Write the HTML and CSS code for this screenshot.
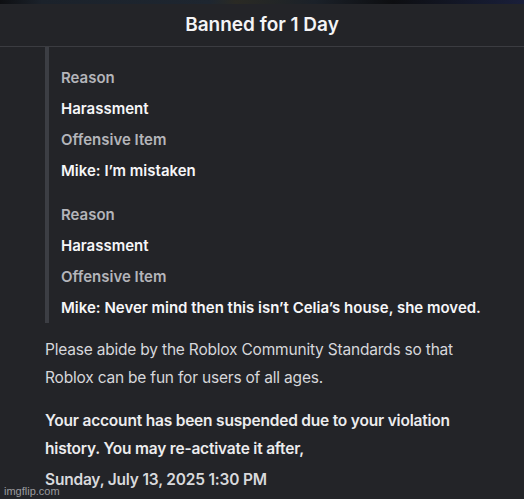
FILE: index.html
```html
<!DOCTYPE html>
<html lang="en">
<head>
  <meta charset="UTF-8">
  <title>Banned for 1 Day</title>
  <link rel="stylesheet" href="styles.css">
</head>
<body>

  <div class="strip"></div>

  <div class="modal">
    <h2 class="title">Banned for 1 Day</h2>

    <div class="body">
      <div class="quote">
        <div class="group">
          <div class="label">Reason</div>
          <div class="value">Harassment</div>
          <div class="label">Offensive Item</div>
          <div class="value">Mike: I’m mistaken</div>
        </div>
        <div class="group">
          <div class="label">Reason</div>
          <div class="value">Harassment</div>
          <div class="label">Offensive Item</div>
          <div class="value">Mike: Never mind then this isn’t Celia’s house, she moved.</div>
        </div>
      </div>

      <p class="note">Please abide by the Roblox Community Standards so that Roblox can be fun for users of all ages.</p>

      <p class="note strong">Your account has been suspended due to your violation history. You may re-activate it after,</p>

      <p class="date">Sunday, July 13, 2025 1:30 PM</p>
    </div>
  </div>

  <div class="mark">imgflip.com</div>

</body>
</html>
```

FILE: styles.css
```css
html, body { margin: 0; padding: 0; }
body { width: 524px; height: 499px; overflow: hidden; background: #232428; font-family: Inter, "Noto Sans", sans-serif; color: #f0f0f2; position: relative; }

.strip { height: 4px; background: linear-gradient(90deg, #0e0f12 0%, #1b222b 8%, #1e2630 40%, #2a2a24 45%, #1b2129 60%, #0d0e11 75%, #151a2e 92%, #1a1f3a 100%); }

.title { margin: 0; height: 42px; line-height: 42px; text-align: center; font-size: 19px; font-weight: 600; color: #f4f4f6; border-bottom: 1px solid #3b3c41; }

.body { padding: 0 0 0 45px; }

.quote { border-left: 4px solid #3c3e44; padding: 15px 0 0 12px; }
.group + .group { margin-top: 13px; }
.label, .value { height: 31px; line-height: 31px; font-size: 15px; font-weight: 600; }
.label { color: #b4b5ba; }
.value { color: #f6f6f8; }
.group:last-child .value:last-child { margin-bottom: -8px; }

.note { margin: 21px 0 0; font-size: 15.5px; letter-spacing: -0.2px; line-height: 28px; color: #d6d7db; width: 425px; }
.strong { font-weight: 600; color: #ececee; margin-top: 15px; }
.date { margin: 3px 0 0; font-size: 15.5px; letter-spacing: -0.2px; line-height: 28px; font-weight: 600; color: #d8d9dc; }

.mark { position: absolute; left: 4px; bottom: 2px; font-family: "Liberation Sans", Arial, sans-serif; font-size: 11px; color: #9a9b9f; }
```
